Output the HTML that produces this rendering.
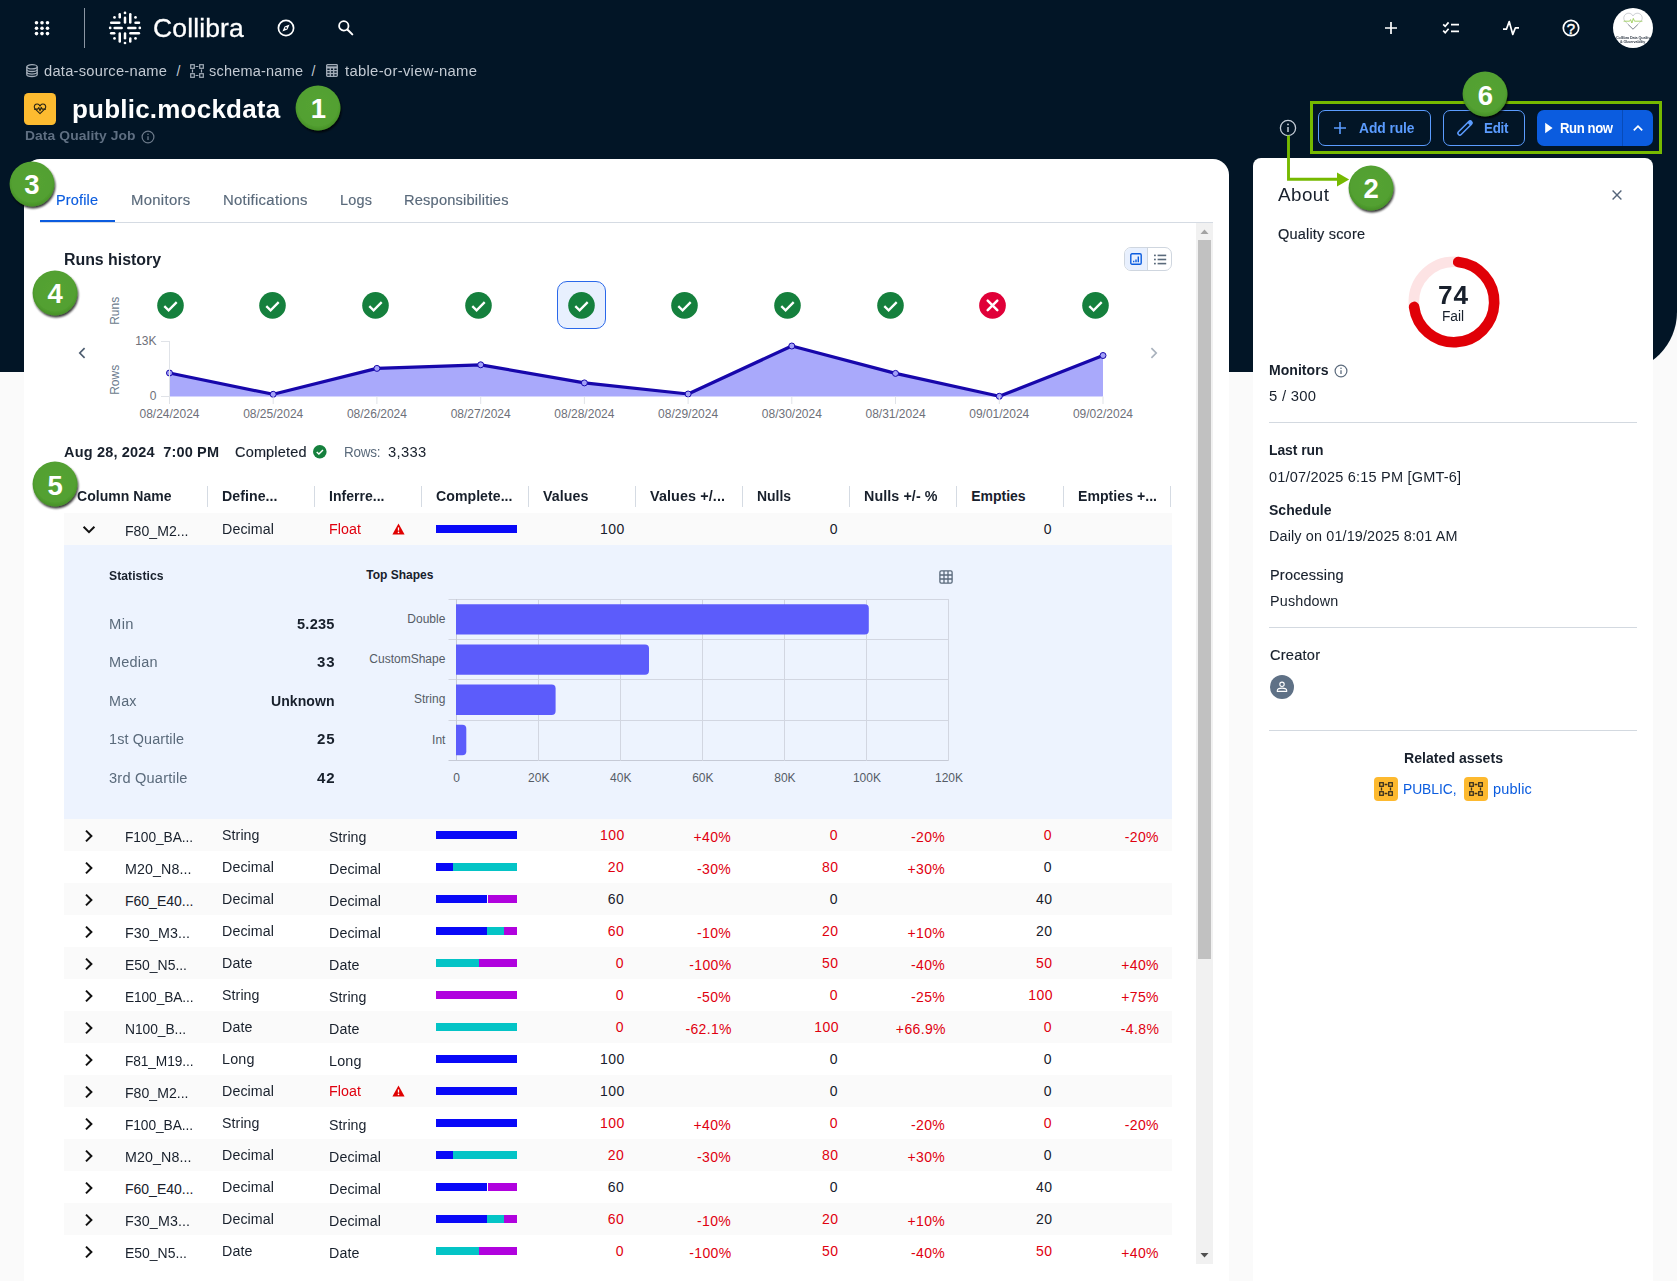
<!DOCTYPE html>
<html lang="en"><head><meta charset="utf-8"><title>public.mockdata - Data Quality Job</title>
<style>
html,body{margin:0;padding:0;}
body{width:1677px;height:1281px;overflow:hidden;background:#fafafa;font-family:'Liberation Sans', Arial, sans-serif;color:#18202c;position:relative;}
.b{position:absolute;box-sizing:border-box;}
.t{position:absolute;white-space:pre;line-height:1;}
svg{overflow:visible;}
</style></head>
<body>
<!-- page chrome -->
<div class="b" style="left:0px;top:0px;width:1677px;height:372px;background:#021526;border-bottom-right-radius:60px;"></div>
<div class="b" style="left:24px;top:159px;width:1205px;height:1122px;background:#fff;border-radius:16px 16px 0 0;"></div>
<div class="b" style="left:1253px;top:158px;width:400px;height:1123px;background:#fff;border-radius:8px 8px 0 0;"></div>
<!-- top navigation -->
<svg class="b" style="left:0px;top:0px;" width="60" height="56" viewBox="0 0 60 56"><g fill="#fff"><circle cx="36.5" cy="22.8" r="1.8"/><circle cx="36.5" cy="28.2" r="1.8"/><circle cx="36.5" cy="33.6" r="1.8"/><circle cx="42" cy="22.8" r="1.8"/><circle cx="42" cy="28.2" r="1.8"/><circle cx="42" cy="33.6" r="1.8"/><circle cx="47.5" cy="22.8" r="1.8"/><circle cx="47.5" cy="28.2" r="1.8"/><circle cx="47.5" cy="33.6" r="1.8"/></g></svg>
<div class="b" style="left:84px;top:8px;width:1px;height:40px;background:#8b96a3;"></div>
<svg class="b" style="left:0px;top:0px;" width="150" height="56" viewBox="0 0 150 56"><g stroke="#fff" stroke-width="2.5" stroke-linecap="round" fill="none"><path d="M111.2 22.65L119.3 22.65"/><path d="M135.5 22.65L139 22.65"/><circle cx="110.2" cy="27.9" r="1.35" fill="#fff" stroke="none"/><path d="M114.6 27.9L121.7 27.9"/><path d="M128.3 27.9L135.4 27.9"/><circle cx="139.8" cy="27.9" r="1.35" fill="#fff" stroke="none"/><path d="M111.2 33.3L114.2 33.3"/><path d="M130.4 33.3L138.9 33.3"/><path d="M119.75 14.3L119.75 17.3"/><circle cx="125" cy="12.9" r="1.35" fill="#fff" stroke="none"/><path d="M125 17.7L125 22.4"/><path d="M130.25 14.3L130.25 22.4"/><path d="M119.75 33.4L119.75 41.5"/><path d="M125 33.4L125 38.2"/><circle cx="125" cy="43" r="1.35" fill="#fff" stroke="none"/><path d="M130.25 38.6L130.25 41.5"/><circle cx="114.5" cy="17.4" r="1.35" fill="#fff" stroke="none"/><circle cx="135.5" cy="17.4" r="1.35" fill="#fff" stroke="none"/><circle cx="114.5" cy="38.4" r="1.35" fill="#fff" stroke="none"/><circle cx="135.5" cy="38.4" r="1.35" fill="#fff" stroke="none"/></g></svg>
<span class="t" style="left:153.00px;top:15.40px;font-size:26px;color:#fff;letter-spacing:0.148px;transform:scaleX(1.0180);transform-origin:0 50%;-webkit-text-stroke:0.3px #fff;">Collibra</span>
<svg class="b" style="left:276px;top:18px;" width="20" height="20" viewBox="0 0 20 20"><circle cx="10" cy="10" r="7.6" fill="none" stroke="#fff" stroke-width="1.7"/><path d="M13.6 6.4L11.4 11.4L6.4 13.6L8.6 8.6Z" fill="#fff"/><circle cx="10" cy="10" r="0.9" fill="#021526"/></svg>
<svg class="b" style="left:336px;top:18px;" width="20" height="20" viewBox="0 0 20 20"><circle cx="7.8" cy="7.9" r="4.7" fill="none" stroke="#fff" stroke-width="1.8"/><path d="M11.4 11.5L16.3 16.4" stroke="#fff" stroke-width="2" stroke-linecap="round"/></svg>
<svg class="b" style="left:1381px;top:18px;" width="20" height="20" viewBox="0 0 20 20"><path d="M10 4V16M4 10H16" stroke="#fff" stroke-width="1.7" fill="none"/></svg>
<svg class="b" style="left:1441px;top:18px;" width="20" height="20" viewBox="0 0 20 20"><g stroke="#fff" stroke-width="1.7" fill="none"><path d="M2.2 6.3L4.2 8.3L7.6 4.4"/><path d="M2.2 12.7L4.2 14.7L7.6 10.8"/><path d="M10 6.6H18M10 13.4H18"/></g></svg>
<svg class="b" style="left:1501px;top:18px;" width="20" height="20" viewBox="0 0 20 20"><path d="M2 11.2H5.4L8.2 3.6L11.8 16.4L14.4 9.8H18" stroke="#fff" stroke-width="1.7" fill="none" stroke-linejoin="round"/></svg>
<svg class="b" style="left:1561px;top:18px;" width="20" height="20" viewBox="0 0 20 20"><circle cx="10" cy="10" r="7.7" fill="none" stroke="#fff" stroke-width="1.7"/></svg>
<span class="t" style="left:1566.83px;top:20.77px;font-size:15px;color:#fff;-webkit-text-stroke:0.45px #fff;">?</span>
<svg class="b" style="left:1613px;top:8px;" width="40" height="40" viewBox="0 0 40 40"><circle cx="20" cy="20" r="20" fill="#fff"/><path d="M20 21.2L11.9 13.1A4.83 4.83 0 1 1 20 8A4.83 4.83 0 1 1 28.1 13.1Z" fill="none" stroke="#b9bdc3" stroke-width="0.7" stroke-linejoin="round"/><path d="M15.2 16.6L20 21.2L24.8 16.6" fill="none" stroke="#6d737b" stroke-width="0.7"/><path d="M10.6 13.2H16.6L17.6 11.6L18.9 15L20.3 10.4L21.5 13.2H29.4" fill="none" stroke="#8cc63f" stroke-width="0.75" stroke-linejoin="round"/></svg>
<span class="t" style="left:1615.75px;top:35.55px;font-size:4px;font-weight:700;color:#39424e;letter-spacing:-0.105px;transform:scaleX(0.9261);transform-origin:0 50%;">Collibra Data Quality</span>
<span class="t" style="left:1620.30px;top:40.05px;font-size:4px;font-weight:700;color:#39424e;letter-spacing:-0.123px;transform:scaleX(0.9194);transform-origin:0 50%;">&amp; Observability</span>
<!-- breadcrumbs -->
<svg class="b" style="left:26px;top:64.2px;" width="12" height="13.4" viewBox="0 0 12 13.4"><g fill="none" stroke="#a3adb9" stroke-width="1.3"><ellipse cx="6" cy="2.8" rx="5.2" ry="2.1"/><path d="M0.8 2.8V10.4C0.8 11.6 3.1 12.5 6 12.5S11.2 11.6 11.2 10.4V2.8"/><path d="M0.8 5.4C0.8 6.6 3.1 7.5 6 7.5S11.2 6.6 11.2 5.4M0.8 8C0.8 9.2 3.1 10.1 6 10.1S11.2 9.2 11.2 8"/></g></svg>
<span class="t" style="left:44.40px;top:64.16px;font-size:14px;color:#c3cad3;letter-spacing:0.238px;transform:scaleX(1.0495);transform-origin:0 50%;">data-source-name</span>
<span class="t" style="left:176.40px;top:64.16px;font-size:14px;color:#c3cad3;">/</span>
<svg class="b" style="left:190px;top:64.2px;" width="14" height="14" viewBox="0 0 14 14"><g fill="none" stroke="#a3adb9" stroke-width="1.2"><rect x="0.7" y="0.7" width="3.6" height="3.6"/><rect x="9.7" y="0.7" width="3.6" height="3.6"/><rect x="0.7" y="9.7" width="3.6" height="3.6"/><rect x="9.7" y="9.7" width="3.6" height="3.6"/><path d="M5.6 2.5H8.4M5.6 11.5H8.4M2.5 5.4V8.6M11.5 5.4V8.6"/></g></svg>
<span class="t" style="left:209.00px;top:64.16px;font-size:14px;color:#c3cad3;letter-spacing:0.205px;transform:scaleX(1.0358);transform-origin:0 50%;">schema-name</span>
<span class="t" style="left:311.40px;top:64.16px;font-size:14px;color:#c3cad3;">/</span>
<svg class="b" style="left:326px;top:64.4px;" width="12" height="13" viewBox="0 0 12 13"><g fill="none" stroke="#a3adb9" stroke-width="1.3"><rect x="0.7" y="0.7" width="10.6" height="11.6" rx="0.8"/><path d="M0.7 3.4H11.3" stroke-width="2.2"/><path d="M0.7 6.6H11.3M0.7 9.5H11.3M4.3 3.4V12.3M7.7 3.4V12.3"/></g></svg>
<span class="t" style="left:344.50px;top:64.16px;font-size:14px;color:#c3cad3;letter-spacing:0.270px;transform:scaleX(1.0609);transform-origin:0 50%;">table-or-view-name</span>
<!-- title -->
<div class="b" style="left:24px;top:92.8px;width:32px;height:32.3px;background:#fdbb30;border-radius:4.5px;"></div>
<svg class="b" style="left:34px;top:102.3px;" width="12" height="12.5" viewBox="0 0 12 12.5"><path d="M6 11.7L1.1 6.9A2.9 2.9 0 1 1 6 4.2A2.9 2.9 0 1 1 10.9 6.9Z" fill="none" stroke="#2a2414" stroke-width="1.1" stroke-linejoin="round"/><path d="M0 7.1H3.7L4.8 5.5L6 8.8L7.2 5.4L8.2 7.1H12" fill="none" stroke="#2a2414" stroke-width="1.1" stroke-linejoin="round"/></svg>
<span class="t" style="left:71.90px;top:97.14px;font-size:25.5px;font-weight:700;color:#fff;letter-spacing:0.195px;transform:scaleX(1.0208);transform-origin:0 50%;">public.mockdata</span>
<span class="t" style="left:24.50px;top:129.46px;font-size:13.6px;font-weight:700;color:#5f6f82;letter-spacing:0.085px;transform:scaleX(1.0181);transform-origin:0 50%;">Data Quality Job</span>
<svg class="b" style="left:140px;top:128.6px;" width="16" height="16" viewBox="0 0 16 16"><circle cx="8" cy="8" r="5.9" fill="none" stroke="#6c7a8a" stroke-width="1.2"/><path d="M8 7.2V11" stroke="#6c7a8a" stroke-width="1.3"/><circle cx="8" cy="5.2" r="0.8" fill="#6c7a8a"/></svg>
<!-- header actions -->
<svg class="b" style="left:1278px;top:118px;" width="20" height="20" viewBox="0 0 20 20"><circle cx="10" cy="10" r="7.6" fill="none" stroke="#c4ccd6" stroke-width="1.3"/><path d="M10 9V14" stroke="#c4ccd6" stroke-width="1.5"/><circle cx="10" cy="6.4" r="0.95" fill="#c4ccd6"/></svg>
<div class="b" style="left:1318px;top:110px;width:113px;height:36px;border:1px solid #5b9cff;border-radius:7px;"></div>
<svg class="b" style="left:1333px;top:121px;" width="14" height="14" viewBox="0 0 14 14"><path d="M7 1V13M1 7H13" stroke="#5b9cff" stroke-width="1.6" fill="none"/></svg>
<span class="t" style="left:1359.00px;top:120.96px;font-size:14px;font-weight:700;color:#5b9cff;letter-spacing:-0.074px;transform:scaleX(0.9865);transform-origin:0 50%;">Add rule</span>
<div class="b" style="left:1443px;top:110px;width:82px;height:36px;border:1px solid #5b9cff;border-radius:7px;"></div>
<svg class="b" style="left:1455px;top:117.9px;" width="20" height="20" viewBox="0 0 20 20"><g transform="translate(10 10) rotate(-45)"><rect x="-9.2" y="-1.9" width="18.4" height="3.8" rx="1.9" fill="none" stroke="#5b9cff" stroke-width="1.5"/><rect x="5.4" y="-1.9" width="3.8" height="3.8" rx="1.2" fill="#5b9cff"/></g></svg>
<span class="t" style="left:1483.60px;top:121.06px;font-size:14px;font-weight:700;color:#5b9cff;letter-spacing:-0.287px;transform:scaleX(0.9534);transform-origin:0 50%;">Edit</span>
<div class="b" style="left:1537px;top:110px;width:116px;height:36px;background:#0b5cdf;border-radius:7px;"></div>
<div class="b" style="left:1622px;top:110px;width:1px;height:36px;background:#084bb8;"></div>
<svg class="b" style="left:1544px;top:122px;" width="10" height="12" viewBox="0 0 10 12"><path d="M1.2 0.8L8.6 6L1.2 11.2Z" fill="#fff"/></svg>
<span class="t" style="left:1559.50px;top:120.96px;font-size:14px;font-weight:700;color:#fff;letter-spacing:-0.434px;transform:scaleX(0.9380);transform-origin:0 50%;">Run now</span>
<svg class="b" style="left:1631px;top:122px;" width="14" height="12" viewBox="0 0 14 12"><path d="M2.8 8.4L7 4.2L11.2 8.4" fill="none" stroke="#fff" stroke-width="1.7"/></svg>
<!-- about panel -->
<span class="t" style="left:1277.60px;top:187.30px;font-size:17.8px;letter-spacing:0.428px;transform:scaleX(1.0585);transform-origin:0 50%;">About</span>
<svg class="b" style="left:1610px;top:188px;" width="14" height="14" viewBox="0 0 14 14"><path d="M2.6 2.6L11.4 11.4M11.4 2.6L2.6 11.4" stroke="#55657a" stroke-width="1.4" fill="none"/></svg>
<span class="t" style="left:1277.50px;top:226.76px;font-size:14px;-webkit-text-stroke:0.16px #18202c;letter-spacing:0.170px;transform:scaleX(1.0389);transform-origin:0 50%;">Quality score</span>
<svg class="b" style="left:1403.5px;top:251.5px;" width="100" height="100" viewBox="0 0 100 100"><circle cx="50" cy="50" r="40.2" fill="none" stroke="#fde3e4" stroke-width="10.6"/><path d="M54.20 10.02A40.2 40.2 0 1 1 10.10 54.90" fill="none" stroke="#e00007" stroke-width="10.6" stroke-linecap="round"/></svg>
<span class="t" style="left:1438.00px;top:282.99px;font-size:25px;font-weight:700;letter-spacing:0.836px;transform:scaleX(1.0472);transform-origin:0 50%;">74</span>
<span class="t" style="left:1442.00px;top:309.36px;font-size:14px;letter-spacing:-0.076px;transform:scaleX(0.9850);transform-origin:0 50%;">Fail</span>
<span class="t" style="left:1269.30px;top:362.76px;font-size:14px;font-weight:700;letter-spacing:0.022px;transform:scaleX(1.0040);transform-origin:0 50%;">Monitors</span>
<svg class="b" style="left:1333px;top:362.6px;" width="16" height="16" viewBox="0 0 16 16"><circle cx="8" cy="8" r="5.9" fill="none" stroke="#5c6b7d" stroke-width="1.2"/><path d="M8 7.2V11" stroke="#5c6b7d" stroke-width="1.3"/><circle cx="8" cy="5.2" r="0.8" fill="#5c6b7d"/></svg>
<span class="t" style="left:1269.30px;top:389.46px;font-size:14px;letter-spacing:0.263px;transform:scaleX(1.0584);transform-origin:0 50%;">5 / 300</span>
<div class="b" style="left:1269px;top:422px;width:368px;height:1px;background:#d3d9e0;"></div>
<span class="t" style="left:1269.30px;top:442.96px;font-size:14px;font-weight:700;letter-spacing:-0.042px;transform:scaleX(0.9920);transform-origin:0 50%;">Last run</span>
<span class="t" style="left:1269.30px;top:469.76px;font-size:14px;letter-spacing:0.177px;transform:scaleX(1.0381);transform-origin:0 50%;">01/07/2025 6:15 PM [GMT-6]</span>
<span class="t" style="left:1269.30px;top:502.76px;font-size:14px;font-weight:700;letter-spacing:0.014px;transform:scaleX(1.0024);transform-origin:0 50%;">Schedule</span>
<span class="t" style="left:1269.30px;top:528.96px;font-size:14px;letter-spacing:0.130px;transform:scaleX(1.0290);transform-origin:0 50%;">Daily on 01/19/2025 8:01 AM</span>
<span class="t" style="left:1270.30px;top:567.76px;font-size:14px;-webkit-text-stroke:0.16px #18202c;letter-spacing:0.182px;transform:scaleX(1.0367);transform-origin:0 50%;">Processing</span>
<span class="t" style="left:1270.30px;top:593.96px;font-size:14px;letter-spacing:0.162px;transform:scaleX(1.0267);transform-origin:0 50%;">Pushdown</span>
<div class="b" style="left:1269px;top:627px;width:368px;height:1px;background:#d3d9e0;"></div>
<span class="t" style="left:1270.30px;top:647.76px;font-size:14px;-webkit-text-stroke:0.16px #18202c;letter-spacing:0.212px;transform:scaleX(1.0426);transform-origin:0 50%;">Creator</span>
<svg class="b" style="left:1269.7px;top:674.8px;" width="24" height="24" viewBox="0 0 24 24"><circle cx="12" cy="12" r="12" fill="#5f7186"/><circle cx="12" cy="9.3" r="2.2" fill="none" stroke="#fff" stroke-width="1.1"/><path d="M7.3 16.4V15.6C7.3 13.9 9.4 13.1 12 13.1S16.7 13.9 16.7 15.6V16.4Z" fill="none" stroke="#fff" stroke-width="1.1" stroke-linejoin="round"/></svg>
<div class="b" style="left:1269px;top:730px;width:368px;height:1px;background:#d3d9e0;"></div>
<span class="t" style="left:1403.50px;top:750.96px;font-size:14px;font-weight:700;letter-spacing:0.029px;transform:scaleX(1.0057);transform-origin:0 50%;">Related assets</span>
<div class="b" style="left:1374px;top:777px;width:24px;height:24px;background:#fdb92f;border-radius:4px;"></div>
<svg class="b" style="left:1379px;top:782px;" width="14" height="14" viewBox="0 0 14 14"><g fill="none" stroke="#3a3120" stroke-width="1.3"><rect x="0.7" y="0.7" width="3.6" height="3.6"/><rect x="9.7" y="0.7" width="3.6" height="3.6"/><rect x="0.7" y="9.7" width="3.6" height="3.6"/><rect x="9.7" y="9.7" width="3.6" height="3.6"/><path d="M5.6 2.5H8.4M5.6 11.5H8.4M2.5 5.4V8.6M11.5 5.4V8.6"/></g></svg>
<div class="b" style="left:1464px;top:777px;width:24px;height:24px;background:#fdb92f;border-radius:4px;"></div>
<svg class="b" style="left:1469px;top:782px;" width="14" height="14" viewBox="0 0 14 14"><g fill="none" stroke="#3a3120" stroke-width="1.3"><rect x="0.7" y="0.7" width="3.6" height="3.6"/><rect x="9.7" y="0.7" width="3.6" height="3.6"/><rect x="0.7" y="9.7" width="3.6" height="3.6"/><rect x="9.7" y="9.7" width="3.6" height="3.6"/><path d="M5.6 2.5H8.4M5.6 11.5H8.4M2.5 5.4V8.6M11.5 5.4V8.6"/></g></svg>
<span class="t" style="left:1402.50px;top:781.96px;font-size:14px;color:#0b5cdf;letter-spacing:-0.065px;transform:scaleX(0.9893);transform-origin:0 50%;">PUBLIC,</span>
<span class="t" style="left:1492.70px;top:781.96px;font-size:14px;color:#0b5cdf;letter-spacing:0.170px;transform:scaleX(1.0362);transform-origin:0 50%;">public</span>
<!-- tabs -->
<div class="b" style="left:40px;top:222px;width:1173px;height:1px;background:#d5dbe3;"></div>
<div class="b" style="left:40px;top:220px;width:75px;height:2.4px;background:#0b5cdf;"></div>
<span class="t" style="left:56.40px;top:192.96px;font-size:14px;-webkit-text-stroke:0.16px #0b5cdf;color:#0b5cdf;letter-spacing:0.149px;transform:scaleX(1.0350);transform-origin:0 50%;">Profile</span>
<span class="t" style="left:131.00px;top:192.96px;font-size:14px;-webkit-text-stroke:0.16px #5a6a7b;color:#5a6a7b;letter-spacing:0.297px;transform:scaleX(1.0616);transform-origin:0 50%;">Monitors</span>
<span class="t" style="left:222.50px;top:192.96px;font-size:14px;-webkit-text-stroke:0.16px #5a6a7b;color:#5a6a7b;letter-spacing:0.258px;transform:scaleX(1.0648);transform-origin:0 50%;">Notifications</span>
<span class="t" style="left:339.70px;top:192.96px;font-size:14px;-webkit-text-stroke:0.16px #5a6a7b;color:#5a6a7b;letter-spacing:0.212px;transform:scaleX(1.0324);transform-origin:0 50%;">Logs</span>
<span class="t" style="left:403.90px;top:192.96px;font-size:14px;-webkit-text-stroke:0.16px #5a6a7b;color:#5a6a7b;letter-spacing:0.184px;transform:scaleX(1.0445);transform-origin:0 50%;">Responsibilities</span>
<div class="b" style="left:1196px;top:223px;width:17px;height:1041px;background:#f1f1f1;"></div>
<div class="b" style="left:1198px;top:240px;width:13px;height:719px;background:#c1c1c1;"></div>
<svg class="b" style="left:1196px;top:223px;" width="17" height="17" viewBox="0 0 17 17"><path d="M4.5 11L8.5 6.5L12.5 11Z" fill="#a3a3a3"/></svg>
<svg class="b" style="left:1196px;top:1247px;" width="17" height="17" viewBox="0 0 17 17"><path d="M4.5 6L8.5 10.5L12.5 6Z" fill="#505050"/></svg>
<!-- runs history -->
<span class="t" style="left:64.00px;top:251.78px;font-size:16px;font-weight:700;letter-spacing:-0.029px;transform:scaleX(0.9951);transform-origin:0 50%;">Runs history</span>
<div class="b" style="left:1124px;top:247px;width:48px;height:24px;background:#fff;border:1px solid #cfd6df;border-radius:7px;overflow:hidden;"><div class="b" style="left:0;top:0;width:23px;height:22px;background:#e8f0fe;border-right:1px solid #cfd6df;"></div></div>
<svg class="b" style="left:1130px;top:253px;" width="12" height="12" viewBox="0 0 12 12"><rect x="0.8" y="0.8" width="10.4" height="10.4" rx="1.2" fill="none" stroke="#0b5cdf" stroke-width="1.4"/><path d="M3.7 9.3V7.7M6 9.3V6.4M8.3 9.3V3.4" stroke="#0b5cdf" stroke-width="1.4"/></svg>
<svg class="b" style="left:1153.5px;top:253.5px;" width="13" height="11" viewBox="0 0 13 11"><g fill="#5a6a7b"><rect x="0" y="0.6" width="1.8" height="1.6"/><rect x="0" y="4.7" width="1.8" height="1.6"/><rect x="0" y="8.8" width="1.8" height="1.6"/><rect x="3.6" y="0.6" width="8.6" height="1.6"/><rect x="3.6" y="4.7" width="8.6" height="1.6"/><rect x="3.6" y="8.8" width="8.6" height="1.6"/></g></svg>
<span class="t" style="left:100.69px;top:304.54px;font-size:12px;color:#6b7a8c;transform:rotate(-90deg);transform-origin:50% 48.85%;">Runs</span>
<span class="t" style="left:99.69px;top:374.04px;font-size:12px;color:#6b7a8c;transform:rotate(-90deg);transform-origin:50% 48.85%;">Rows</span>
<div class="b" style="left:557.4px;top:280.7px;width:48.5px;height:48.3px;background:#e8f0fe;border:1.2px solid #2a68ea;border-radius:10px;"></div>
<svg class="b" style="left:156.5px;top:291.5px;" width="27" height="27" viewBox="0 0 27 27"><circle cx="13.5" cy="13.4" r="13.3" fill="#15803d"/><path d="M7.3 14.1L11.6 18.3L19.7 10.1" stroke="#fff" stroke-width="2.3" fill="none"/></svg>
<svg class="b" style="left:259.37px;top:291.5px;" width="27" height="27" viewBox="0 0 27 27"><circle cx="13.5" cy="13.4" r="13.3" fill="#15803d"/><path d="M7.3 14.1L11.6 18.3L19.7 10.1" stroke="#fff" stroke-width="2.3" fill="none"/></svg>
<svg class="b" style="left:362.24px;top:291.5px;" width="27" height="27" viewBox="0 0 27 27"><circle cx="13.5" cy="13.4" r="13.3" fill="#15803d"/><path d="M7.3 14.1L11.6 18.3L19.7 10.1" stroke="#fff" stroke-width="2.3" fill="none"/></svg>
<svg class="b" style="left:465.11px;top:291.5px;" width="27" height="27" viewBox="0 0 27 27"><circle cx="13.5" cy="13.4" r="13.3" fill="#15803d"/><path d="M7.3 14.1L11.6 18.3L19.7 10.1" stroke="#fff" stroke-width="2.3" fill="none"/></svg>
<svg class="b" style="left:567.98px;top:291.5px;" width="27" height="27" viewBox="0 0 27 27"><circle cx="13.5" cy="13.4" r="13.3" fill="#15803d"/><path d="M7.3 14.1L11.6 18.3L19.7 10.1" stroke="#fff" stroke-width="2.3" fill="none"/></svg>
<svg class="b" style="left:670.85px;top:291.5px;" width="27" height="27" viewBox="0 0 27 27"><circle cx="13.5" cy="13.4" r="13.3" fill="#15803d"/><path d="M7.3 14.1L11.6 18.3L19.7 10.1" stroke="#fff" stroke-width="2.3" fill="none"/></svg>
<svg class="b" style="left:773.72px;top:291.5px;" width="27" height="27" viewBox="0 0 27 27"><circle cx="13.5" cy="13.4" r="13.3" fill="#15803d"/><path d="M7.3 14.1L11.6 18.3L19.7 10.1" stroke="#fff" stroke-width="2.3" fill="none"/></svg>
<svg class="b" style="left:876.59px;top:291.5px;" width="27" height="27" viewBox="0 0 27 27"><circle cx="13.5" cy="13.4" r="13.3" fill="#15803d"/><path d="M7.3 14.1L11.6 18.3L19.7 10.1" stroke="#fff" stroke-width="2.3" fill="none"/></svg>
<svg class="b" style="left:979.46px;top:291.5px;" width="27" height="27" viewBox="0 0 27 27"><circle cx="13.5" cy="13.4" r="13.35" fill="#e00038"/><path d="M8.7 8.6L18.3 18.2M18.3 8.6L8.7 18.2" stroke="#fff" stroke-width="2.5" stroke-linecap="round" fill="none"/></svg>
<svg class="b" style="left:1082.33px;top:291.5px;" width="27" height="27" viewBox="0 0 27 27"><circle cx="13.5" cy="13.4" r="13.3" fill="#15803d"/><path d="M7.3 14.1L11.6 18.3L19.7 10.1" stroke="#fff" stroke-width="2.3" fill="none"/></svg>
<svg class="b" style="left:76px;top:346px;" width="12" height="14" viewBox="0 0 12 14"><path d="M8.6 2.2L3.8 7L8.6 11.8" fill="none" stroke="#4d5d70" stroke-width="1.7"/></svg>
<svg class="b" style="left:1148px;top:346px;" width="12" height="14" viewBox="0 0 12 14"><path d="M3.4 2.2L8.2 7L3.4 11.8" fill="none" stroke="#a9b2bd" stroke-width="1.7"/></svg>
<svg class="b" style="left:0px;top:0px;" width="1230" height="420" viewBox="0 0 1230 420"><polygon points="169.5,396.5 169.5,373 273.2,394.3 376.9,368.4 480.7,364.8 584.4,382.9 688.1,394 791.8,346 895.5,373.4 999.3,396.3 1103.0,355.5 1103.0,396.5" fill="#a9a9fb"/><polyline points="169.5,373 273.2,394.3 376.9,368.4 480.7,364.8 584.4,382.9 688.1,394 791.8,346 895.5,373.4 999.3,396.3 1103.0,355.5" fill="none" stroke="#1707ab" stroke-width="3.2" stroke-linejoin="round"/><circle cx="169.5" cy="373" r="3" fill="#a3a1f8" stroke="#1707ab" stroke-width="1"/><circle cx="273.2" cy="394.3" r="3" fill="#a3a1f8" stroke="#1707ab" stroke-width="1"/><circle cx="376.9" cy="368.4" r="3" fill="#a3a1f8" stroke="#1707ab" stroke-width="1"/><circle cx="480.7" cy="364.8" r="3" fill="#a3a1f8" stroke="#1707ab" stroke-width="1"/><circle cx="584.4" cy="382.9" r="3" fill="#a3a1f8" stroke="#1707ab" stroke-width="1"/><circle cx="688.1" cy="394" r="3" fill="#a3a1f8" stroke="#1707ab" stroke-width="1"/><circle cx="791.8" cy="346" r="3" fill="#a3a1f8" stroke="#1707ab" stroke-width="1"/><circle cx="895.5" cy="373.4" r="3" fill="#a3a1f8" stroke="#1707ab" stroke-width="1"/><circle cx="999.3" cy="396.3" r="3" fill="#a3a1f8" stroke="#1707ab" stroke-width="1"/><circle cx="1103.0" cy="355.5" r="3" fill="#a3a1f8" stroke="#1707ab" stroke-width="1"/><path d="M169.5 341V396.5" stroke="#e0e3e8" stroke-width="1"/><path d="M161 341.5H169.5M161 396.5H169.5" stroke="#e0e3e8" stroke-width="1"/><path d="M169.5 396.5V404" stroke="#e0e3e8" stroke-width="1"/><path d="M273.2 396.5V404" stroke="#e0e3e8" stroke-width="1"/><path d="M376.9 396.5V404" stroke="#e0e3e8" stroke-width="1"/><path d="M480.7 396.5V404" stroke="#e0e3e8" stroke-width="1"/><path d="M584.4 396.5V404" stroke="#e0e3e8" stroke-width="1"/><path d="M688.1 396.5V404" stroke="#e0e3e8" stroke-width="1"/><path d="M791.8 396.5V404" stroke="#e0e3e8" stroke-width="1"/><path d="M895.5 396.5V404" stroke="#e0e3e8" stroke-width="1"/><path d="M999.3 396.5V404" stroke="#e0e3e8" stroke-width="1"/><path d="M1103.0 396.5V404" stroke="#e0e3e8" stroke-width="1"/></svg>
<span class="t" style="left:135.14px;top:335.14px;font-size:12px;color:#6e7079;">13K</span>
<span class="t" style="left:149.81px;top:390.14px;font-size:12px;color:#6e7079;">0</span>
<span class="t" style="left:139.47px;top:407.74px;font-size:12px;color:#6e7079;">08/24/2024</span>
<span class="t" style="left:243.19px;top:407.74px;font-size:12px;color:#6e7079;">08/25/2024</span>
<span class="t" style="left:346.91px;top:407.74px;font-size:12px;color:#6e7079;">08/26/2024</span>
<span class="t" style="left:450.63px;top:407.74px;font-size:12px;color:#6e7079;">08/27/2024</span>
<span class="t" style="left:554.35px;top:407.74px;font-size:12px;color:#6e7079;">08/28/2024</span>
<span class="t" style="left:658.07px;top:407.74px;font-size:12px;color:#6e7079;">08/29/2024</span>
<span class="t" style="left:761.79px;top:407.74px;font-size:12px;color:#6e7079;">08/30/2024</span>
<span class="t" style="left:865.51px;top:407.74px;font-size:12px;color:#6e7079;">08/31/2024</span>
<span class="t" style="left:969.23px;top:407.74px;font-size:12px;color:#6e7079;">09/01/2024</span>
<span class="t" style="left:1072.95px;top:407.74px;font-size:12px;color:#6e7079;">09/02/2024</span>
<span class="t" style="left:64.00px;top:444.96px;font-size:14px;font-weight:700;letter-spacing:0.168px;transform:scaleX(1.0357);transform-origin:0 50%;">Aug 28, 2024  7:00 PM</span>
<span class="t" style="left:235.40px;top:444.96px;font-size:14px;-webkit-text-stroke:0.16px #18202c;letter-spacing:0.184px;transform:scaleX(1.0336);transform-origin:0 50%;">Completed</span>
<svg class="b" style="left:313px;top:445.1px;" width="13.6" height="13.6" viewBox="0 0 13.6 13.6"><circle cx="6.8" cy="6.8" r="6.8" fill="#15803d"/><path d="M3.7 7L5.9 9.1L10 4.9" stroke="#fff" stroke-width="1.4" fill="none"/></svg>
<span class="t" style="left:344.30px;top:444.96px;font-size:14px;color:#5a6a7b;letter-spacing:-0.250px;transform:scaleX(0.9629);transform-origin:0 50%;">Rows:</span>
<span class="t" style="left:387.50px;top:444.96px;font-size:14px;letter-spacing:0.308px;transform:scaleX(1.0557);transform-origin:0 50%;">3,333</span>
<!-- column table -->
<span class="t" style="left:76.90px;top:488.76px;font-size:14px;font-weight:700;letter-spacing:0.015px;transform:scaleX(1.0024);transform-origin:0 50%;">Column Name</span>
<span class="t" style="left:222.40px;top:488.76px;font-size:14px;font-weight:700;letter-spacing:0.051px;transform:scaleX(1.0114);transform-origin:0 50%;">Define...</span>
<span class="t" style="left:329.30px;top:488.76px;font-size:14px;font-weight:700;letter-spacing:0.011px;transform:scaleX(1.0027);transform-origin:0 50%;">Inferre...</span>
<span class="t" style="left:436.20px;top:488.76px;font-size:14px;font-weight:700;letter-spacing:0.041px;transform:scaleX(1.0082);transform-origin:0 50%;">Complete...</span>
<span class="t" style="left:543.20px;top:488.76px;font-size:14px;font-weight:700;letter-spacing:0.089px;transform:scaleX(1.0152);transform-origin:0 50%;">Values</span>
<span class="t" style="left:650.20px;top:488.76px;font-size:14px;font-weight:700;letter-spacing:0.106px;transform:scaleX(1.0250);transform-origin:0 50%;">Values +/...</span>
<span class="t" style="left:757.20px;top:488.76px;font-size:14px;font-weight:700;letter-spacing:-0.024px;transform:scaleX(0.9959);transform-origin:0 50%;">Nulls</span>
<span class="t" style="left:864.20px;top:488.76px;font-size:14px;font-weight:700;letter-spacing:0.091px;transform:scaleX(1.0195);transform-origin:0 50%;">Nulls +/- %</span>
<span class="t" style="left:971.20px;top:488.76px;font-size:14px;font-weight:700;">Empties</span>
<span class="t" style="left:1078.20px;top:488.76px;font-size:14px;font-weight:700;letter-spacing:0.029px;transform:scaleX(1.0061);transform-origin:0 50%;">Empties +...</span>
<div class="b" style="left:207px;top:486px;width:1px;height:21px;background:#d5dbe3;"></div>
<div class="b" style="left:314px;top:486px;width:1px;height:21px;background:#d5dbe3;"></div>
<div class="b" style="left:421px;top:486px;width:1px;height:21px;background:#d5dbe3;"></div>
<div class="b" style="left:528px;top:486px;width:1px;height:21px;background:#d5dbe3;"></div>
<div class="b" style="left:635px;top:486px;width:1px;height:21px;background:#d5dbe3;"></div>
<div class="b" style="left:742px;top:486px;width:1px;height:21px;background:#d5dbe3;"></div>
<div class="b" style="left:849px;top:486px;width:1px;height:21px;background:#d5dbe3;"></div>
<div class="b" style="left:956px;top:486px;width:1px;height:21px;background:#d5dbe3;"></div>
<div class="b" style="left:1063px;top:486px;width:1px;height:21px;background:#d5dbe3;"></div>
<div class="b" style="left:1170px;top:486px;width:1px;height:21px;background:#d5dbe3;"></div>
<div class="b" style="left:64px;top:513px;width:1108px;height:32px;background:#fafafa;"></div>
<svg class="b" style="left:80.5px;top:523.0px;" width="16" height="13" viewBox="0 0 16 13"><path d="M2.6 3.8L8 9.2L13.4 3.8" fill="none" stroke="#111" stroke-width="2"/></svg>
<span class="t" style="left:125.00px;top:523.76px;font-size:14px;letter-spacing:0.023px;transform:scaleX(1.0045);transform-origin:0 50%;">F80_M2...</span>
<span class="t" style="left:222.40px;top:521.76px;font-size:14px;letter-spacing:0.093px;transform:scaleX(1.0169);transform-origin:0 50%;">Decimal</span>
<span class="t" style="left:329.30px;top:522.16px;font-size:14px;color:#e0000f;letter-spacing:0.086px;transform:scaleX(1.0169);transform-origin:0 50%;">Float</span>
<svg class="b" style="left:391.5px;top:522.5px;" width="13" height="12" viewBox="0 0 13 12"><path d="M6.5 0.6L12.6 11.4H0.4Z" fill="#e00000"/><path d="M6.5 4.4V7.6" stroke="#fff" stroke-width="1.3"/><circle cx="6.5" cy="9.4" r="0.8" fill="#fff"/></svg>
<div class="b" style="left:436px;top:525px;width:81px;height:8px;background:#0909f8;"></div>
<span class="t" style="left:599.64px;top:521.76px;font-size:14px;letter-spacing:0.45px;margin-left:0.45px;">100</span>
<span class="t" style="left:829.30px;top:521.76px;font-size:14px;letter-spacing:0.45px;margin-left:0.45px;">0</span>
<span class="t" style="left:1043.30px;top:521.76px;font-size:14px;letter-spacing:0.45px;margin-left:0.45px;">0</span>
<div class="b" style="left:64px;top:819px;width:1108px;height:32px;background:#fafafa;"></div>
<svg class="b" style="left:82px;top:827.5px;" width="13" height="16" viewBox="0 0 13 16"><path d="M4 2.6L9.4 8L4 13.4" fill="none" stroke="#111" stroke-width="2"/></svg>
<span class="t" style="left:125.00px;top:829.76px;font-size:14px;letter-spacing:-0.093px;transform:scaleX(0.9825);transform-origin:0 50%;">F100_BA...</span>
<span class="t" style="left:222.40px;top:827.76px;font-size:14px;letter-spacing:0.073px;transform:scaleX(1.0151);transform-origin:0 50%;">String</span>
<span class="t" style="left:329.30px;top:829.76px;font-size:14px;letter-spacing:0.073px;transform:scaleX(1.0151);transform-origin:0 50%;">String</span>
<div class="b" style="left:436px;top:831px;width:81px;height:8px;background:#0909f8;"></div>
<span class="t" style="left:599.64px;top:827.76px;font-size:14px;color:#e0000f;letter-spacing:0.45px;margin-left:0.45px;">100</span>
<span class="t" style="left:693.20px;top:829.76px;font-size:14px;color:#e0000f;letter-spacing:0.35px;margin-left:0.35px;">+40%</span>
<span class="t" style="left:829.30px;top:827.76px;font-size:14px;color:#e0000f;letter-spacing:0.45px;margin-left:0.45px;">0</span>
<span class="t" style="left:910.71px;top:829.76px;font-size:14px;color:#e0000f;letter-spacing:0.35px;margin-left:0.35px;">-20%</span>
<span class="t" style="left:1043.30px;top:827.76px;font-size:14px;color:#e0000f;letter-spacing:0.45px;margin-left:0.45px;">0</span>
<span class="t" style="left:1124.41px;top:829.76px;font-size:14px;color:#e0000f;letter-spacing:0.35px;margin-left:0.35px;">-20%</span>
<svg class="b" style="left:82px;top:859.5px;" width="13" height="16" viewBox="0 0 13 16"><path d="M4 2.6L9.4 8L4 13.4" fill="none" stroke="#111" stroke-width="2"/></svg>
<span class="t" style="left:125.00px;top:861.76px;font-size:14px;letter-spacing:0.094px;transform:scaleX(1.0177);transform-origin:0 50%;">M20_N8...</span>
<span class="t" style="left:222.40px;top:859.76px;font-size:14px;letter-spacing:0.093px;transform:scaleX(1.0169);transform-origin:0 50%;">Decimal</span>
<span class="t" style="left:329.30px;top:861.76px;font-size:14px;letter-spacing:0.093px;transform:scaleX(1.0169);transform-origin:0 50%;">Decimal</span>
<div class="b" style="left:436px;top:863px;width:17px;height:8px;background:#0909f8;"></div>
<div class="b" style="left:453px;top:863px;width:64px;height:8px;background:#04c4c6;"></div>
<span class="t" style="left:607.42px;top:859.76px;font-size:14px;color:#e0000f;letter-spacing:0.45px;margin-left:0.45px;">20</span>
<span class="t" style="left:696.71px;top:861.76px;font-size:14px;color:#e0000f;letter-spacing:0.35px;margin-left:0.35px;">-30%</span>
<span class="t" style="left:821.52px;top:859.76px;font-size:14px;color:#e0000f;letter-spacing:0.45px;margin-left:0.45px;">80</span>
<span class="t" style="left:907.20px;top:861.76px;font-size:14px;color:#e0000f;letter-spacing:0.35px;margin-left:0.35px;">+30%</span>
<span class="t" style="left:1043.30px;top:859.76px;font-size:14px;letter-spacing:0.45px;margin-left:0.45px;">0</span>
<div class="b" style="left:64px;top:883px;width:1108px;height:32px;background:#fafafa;"></div>
<svg class="b" style="left:82px;top:891.5px;" width="13" height="16" viewBox="0 0 13 16"><path d="M4 2.6L9.4 8L4 13.4" fill="none" stroke="#111" stroke-width="2"/></svg>
<span class="t" style="left:125.00px;top:893.76px;font-size:14px;">F60_E40...</span>
<span class="t" style="left:222.40px;top:891.76px;font-size:14px;letter-spacing:0.093px;transform:scaleX(1.0169);transform-origin:0 50%;">Decimal</span>
<span class="t" style="left:329.30px;top:893.76px;font-size:14px;letter-spacing:0.093px;transform:scaleX(1.0169);transform-origin:0 50%;">Decimal</span>
<div class="b" style="left:436px;top:895px;width:51px;height:8px;background:#0909f8;"></div>
<div class="b" style="left:488px;top:895px;width:29px;height:8px;background:#b002de;"></div>
<span class="t" style="left:607.42px;top:891.76px;font-size:14px;letter-spacing:0.45px;margin-left:0.45px;">60</span>
<span class="t" style="left:829.30px;top:891.76px;font-size:14px;letter-spacing:0.45px;margin-left:0.45px;">0</span>
<span class="t" style="left:1035.52px;top:891.76px;font-size:14px;letter-spacing:0.45px;margin-left:0.45px;">40</span>
<svg class="b" style="left:82px;top:923.5px;" width="13" height="16" viewBox="0 0 13 16"><path d="M4 2.6L9.4 8L4 13.4" fill="none" stroke="#111" stroke-width="2"/></svg>
<span class="t" style="left:125.00px;top:925.76px;font-size:14px;letter-spacing:0.097px;transform:scaleX(1.0187);transform-origin:0 50%;">F30_M3...</span>
<span class="t" style="left:222.40px;top:923.76px;font-size:14px;letter-spacing:0.093px;transform:scaleX(1.0169);transform-origin:0 50%;">Decimal</span>
<span class="t" style="left:329.30px;top:925.76px;font-size:14px;letter-spacing:0.093px;transform:scaleX(1.0169);transform-origin:0 50%;">Decimal</span>
<div class="b" style="left:436px;top:927px;width:51px;height:8px;background:#0909f8;"></div>
<div class="b" style="left:487px;top:927px;width:17px;height:8px;background:#04c4c6;"></div>
<div class="b" style="left:504px;top:927px;width:13px;height:8px;background:#b002de;"></div>
<span class="t" style="left:607.42px;top:923.76px;font-size:14px;color:#e0000f;letter-spacing:0.45px;margin-left:0.45px;">60</span>
<span class="t" style="left:696.71px;top:925.76px;font-size:14px;color:#e0000f;letter-spacing:0.35px;margin-left:0.35px;">-10%</span>
<span class="t" style="left:821.52px;top:923.76px;font-size:14px;color:#e0000f;letter-spacing:0.45px;margin-left:0.45px;">20</span>
<span class="t" style="left:907.20px;top:925.76px;font-size:14px;color:#e0000f;letter-spacing:0.35px;margin-left:0.35px;">+10%</span>
<span class="t" style="left:1035.52px;top:923.76px;font-size:14px;letter-spacing:0.45px;margin-left:0.45px;">20</span>
<div class="b" style="left:64px;top:947px;width:1108px;height:32px;background:#fafafa;"></div>
<svg class="b" style="left:82px;top:955.5px;" width="13" height="16" viewBox="0 0 13 16"><path d="M4 2.6L9.4 8L4 13.4" fill="none" stroke="#111" stroke-width="2"/></svg>
<span class="t" style="left:125.00px;top:957.76px;font-size:14px;letter-spacing:-0.013px;transform:scaleX(0.9974);transform-origin:0 50%;">E50_N5...</span>
<span class="t" style="left:222.40px;top:955.76px;font-size:14px;letter-spacing:0.121px;transform:scaleX(1.0187);transform-origin:0 50%;">Date</span>
<span class="t" style="left:329.30px;top:957.76px;font-size:14px;letter-spacing:0.121px;transform:scaleX(1.0187);transform-origin:0 50%;">Date</span>
<div class="b" style="left:436px;top:959px;width:43px;height:8px;background:#04c4c6;"></div>
<div class="b" style="left:479px;top:959px;width:38px;height:8px;background:#b002de;"></div>
<span class="t" style="left:615.20px;top:955.76px;font-size:14px;color:#e0000f;letter-spacing:0.45px;margin-left:0.45px;">0</span>
<span class="t" style="left:688.93px;top:957.76px;font-size:14px;color:#e0000f;letter-spacing:0.35px;margin-left:0.35px;">-100%</span>
<span class="t" style="left:821.52px;top:955.76px;font-size:14px;color:#e0000f;letter-spacing:0.45px;margin-left:0.45px;">50</span>
<span class="t" style="left:910.71px;top:957.76px;font-size:14px;color:#e0000f;letter-spacing:0.35px;margin-left:0.35px;">-40%</span>
<span class="t" style="left:1035.52px;top:955.76px;font-size:14px;color:#e0000f;letter-spacing:0.45px;margin-left:0.45px;">50</span>
<span class="t" style="left:1120.90px;top:957.76px;font-size:14px;color:#e0000f;letter-spacing:0.35px;margin-left:0.35px;">+40%</span>
<svg class="b" style="left:82px;top:987.5px;" width="13" height="16" viewBox="0 0 13 16"><path d="M4 2.6L9.4 8L4 13.4" fill="none" stroke="#111" stroke-width="2"/></svg>
<span class="t" style="left:125.00px;top:989.76px;font-size:14px;letter-spacing:-0.106px;transform:scaleX(0.9803);transform-origin:0 50%;">E100_BA...</span>
<span class="t" style="left:222.40px;top:987.76px;font-size:14px;letter-spacing:0.073px;transform:scaleX(1.0151);transform-origin:0 50%;">String</span>
<span class="t" style="left:329.30px;top:989.76px;font-size:14px;letter-spacing:0.073px;transform:scaleX(1.0151);transform-origin:0 50%;">String</span>
<div class="b" style="left:436px;top:991px;width:81px;height:8px;background:#b002de;"></div>
<span class="t" style="left:615.20px;top:987.76px;font-size:14px;color:#e0000f;letter-spacing:0.45px;margin-left:0.45px;">0</span>
<span class="t" style="left:696.71px;top:989.76px;font-size:14px;color:#e0000f;letter-spacing:0.35px;margin-left:0.35px;">-50%</span>
<span class="t" style="left:829.30px;top:987.76px;font-size:14px;color:#e0000f;letter-spacing:0.45px;margin-left:0.45px;">0</span>
<span class="t" style="left:910.71px;top:989.76px;font-size:14px;color:#e0000f;letter-spacing:0.35px;margin-left:0.35px;">-25%</span>
<span class="t" style="left:1027.74px;top:987.76px;font-size:14px;color:#e0000f;letter-spacing:0.45px;margin-left:0.45px;">100</span>
<span class="t" style="left:1120.90px;top:989.76px;font-size:14px;color:#e0000f;letter-spacing:0.35px;margin-left:0.35px;">+75%</span>
<div class="b" style="left:64px;top:1011px;width:1108px;height:32px;background:#fafafa;"></div>
<svg class="b" style="left:82px;top:1019.5px;" width="13" height="16" viewBox="0 0 13 16"><path d="M4 2.6L9.4 8L4 13.4" fill="none" stroke="#111" stroke-width="2"/></svg>
<span class="t" style="left:125.00px;top:1021.76px;font-size:14px;letter-spacing:-0.064px;transform:scaleX(0.9878);transform-origin:0 50%;">N100_B...</span>
<span class="t" style="left:222.40px;top:1019.76px;font-size:14px;letter-spacing:0.121px;transform:scaleX(1.0187);transform-origin:0 50%;">Date</span>
<span class="t" style="left:329.30px;top:1021.76px;font-size:14px;letter-spacing:0.121px;transform:scaleX(1.0187);transform-origin:0 50%;">Date</span>
<div class="b" style="left:436px;top:1023px;width:81px;height:8px;background:#04c4c6;"></div>
<span class="t" style="left:615.20px;top:1019.76px;font-size:14px;color:#e0000f;letter-spacing:0.45px;margin-left:0.45px;">0</span>
<span class="t" style="left:685.04px;top:1021.76px;font-size:14px;color:#e0000f;letter-spacing:0.35px;margin-left:0.35px;">-62.1%</span>
<span class="t" style="left:813.74px;top:1019.76px;font-size:14px;color:#e0000f;letter-spacing:0.45px;margin-left:0.45px;">100</span>
<span class="t" style="left:895.52px;top:1021.76px;font-size:14px;color:#e0000f;letter-spacing:0.35px;margin-left:0.35px;">+66.9%</span>
<span class="t" style="left:1043.30px;top:1019.76px;font-size:14px;color:#e0000f;letter-spacing:0.45px;margin-left:0.45px;">0</span>
<span class="t" style="left:1120.52px;top:1021.76px;font-size:14px;color:#e0000f;letter-spacing:0.35px;margin-left:0.35px;">-4.8%</span>
<svg class="b" style="left:82px;top:1051.5px;" width="13" height="16" viewBox="0 0 13 16"><path d="M4 2.6L9.4 8L4 13.4" fill="none" stroke="#111" stroke-width="2"/></svg>
<span class="t" style="left:125.00px;top:1053.76px;font-size:14px;letter-spacing:-0.106px;transform:scaleX(0.9803);transform-origin:0 50%;">F81_M19...</span>
<span class="t" style="left:222.40px;top:1051.76px;font-size:14px;letter-spacing:0.175px;transform:scaleX(1.0259);transform-origin:0 50%;">Long</span>
<span class="t" style="left:329.30px;top:1053.76px;font-size:14px;letter-spacing:0.175px;transform:scaleX(1.0259);transform-origin:0 50%;">Long</span>
<div class="b" style="left:436px;top:1055px;width:81px;height:8px;background:#0909f8;"></div>
<span class="t" style="left:599.64px;top:1051.76px;font-size:14px;letter-spacing:0.45px;margin-left:0.45px;">100</span>
<span class="t" style="left:829.30px;top:1051.76px;font-size:14px;letter-spacing:0.45px;margin-left:0.45px;">0</span>
<span class="t" style="left:1043.30px;top:1051.76px;font-size:14px;letter-spacing:0.45px;margin-left:0.45px;">0</span>
<div class="b" style="left:64px;top:1075px;width:1108px;height:32px;background:#fafafa;"></div>
<svg class="b" style="left:82px;top:1083.5px;" width="13" height="16" viewBox="0 0 13 16"><path d="M4 2.6L9.4 8L4 13.4" fill="none" stroke="#111" stroke-width="2"/></svg>
<span class="t" style="left:125.00px;top:1085.76px;font-size:14px;letter-spacing:0.023px;transform:scaleX(1.0045);transform-origin:0 50%;">F80_M2...</span>
<span class="t" style="left:222.40px;top:1083.76px;font-size:14px;letter-spacing:0.093px;transform:scaleX(1.0169);transform-origin:0 50%;">Decimal</span>
<span class="t" style="left:329.30px;top:1084.16px;font-size:14px;color:#e0000f;letter-spacing:0.086px;transform:scaleX(1.0169);transform-origin:0 50%;">Float</span>
<svg class="b" style="left:391.5px;top:1084.5px;" width="13" height="12" viewBox="0 0 13 12"><path d="M6.5 0.6L12.6 11.4H0.4Z" fill="#e00000"/><path d="M6.5 4.4V7.6" stroke="#fff" stroke-width="1.3"/><circle cx="6.5" cy="9.4" r="0.8" fill="#fff"/></svg>
<div class="b" style="left:436px;top:1087px;width:81px;height:8px;background:#0909f8;"></div>
<span class="t" style="left:599.64px;top:1083.76px;font-size:14px;letter-spacing:0.45px;margin-left:0.45px;">100</span>
<span class="t" style="left:829.30px;top:1083.76px;font-size:14px;letter-spacing:0.45px;margin-left:0.45px;">0</span>
<span class="t" style="left:1043.30px;top:1083.76px;font-size:14px;letter-spacing:0.45px;margin-left:0.45px;">0</span>
<svg class="b" style="left:82px;top:1115.5px;" width="13" height="16" viewBox="0 0 13 16"><path d="M4 2.6L9.4 8L4 13.4" fill="none" stroke="#111" stroke-width="2"/></svg>
<span class="t" style="left:125.00px;top:1117.76px;font-size:14px;letter-spacing:-0.093px;transform:scaleX(0.9825);transform-origin:0 50%;">F100_BA...</span>
<span class="t" style="left:222.40px;top:1115.76px;font-size:14px;letter-spacing:0.073px;transform:scaleX(1.0151);transform-origin:0 50%;">String</span>
<span class="t" style="left:329.30px;top:1117.76px;font-size:14px;letter-spacing:0.073px;transform:scaleX(1.0151);transform-origin:0 50%;">String</span>
<div class="b" style="left:436px;top:1119px;width:81px;height:8px;background:#0909f8;"></div>
<span class="t" style="left:599.64px;top:1115.76px;font-size:14px;color:#e0000f;letter-spacing:0.45px;margin-left:0.45px;">100</span>
<span class="t" style="left:693.20px;top:1117.76px;font-size:14px;color:#e0000f;letter-spacing:0.35px;margin-left:0.35px;">+40%</span>
<span class="t" style="left:829.30px;top:1115.76px;font-size:14px;color:#e0000f;letter-spacing:0.45px;margin-left:0.45px;">0</span>
<span class="t" style="left:910.71px;top:1117.76px;font-size:14px;color:#e0000f;letter-spacing:0.35px;margin-left:0.35px;">-20%</span>
<span class="t" style="left:1043.30px;top:1115.76px;font-size:14px;color:#e0000f;letter-spacing:0.45px;margin-left:0.45px;">0</span>
<span class="t" style="left:1124.41px;top:1117.76px;font-size:14px;color:#e0000f;letter-spacing:0.35px;margin-left:0.35px;">-20%</span>
<div class="b" style="left:64px;top:1139px;width:1108px;height:32px;background:#fafafa;"></div>
<svg class="b" style="left:82px;top:1147.5px;" width="13" height="16" viewBox="0 0 13 16"><path d="M4 2.6L9.4 8L4 13.4" fill="none" stroke="#111" stroke-width="2"/></svg>
<span class="t" style="left:125.00px;top:1149.76px;font-size:14px;letter-spacing:0.094px;transform:scaleX(1.0177);transform-origin:0 50%;">M20_N8...</span>
<span class="t" style="left:222.40px;top:1147.76px;font-size:14px;letter-spacing:0.093px;transform:scaleX(1.0169);transform-origin:0 50%;">Decimal</span>
<span class="t" style="left:329.30px;top:1149.76px;font-size:14px;letter-spacing:0.093px;transform:scaleX(1.0169);transform-origin:0 50%;">Decimal</span>
<div class="b" style="left:436px;top:1151px;width:17px;height:8px;background:#0909f8;"></div>
<div class="b" style="left:453px;top:1151px;width:64px;height:8px;background:#04c4c6;"></div>
<span class="t" style="left:607.42px;top:1147.76px;font-size:14px;color:#e0000f;letter-spacing:0.45px;margin-left:0.45px;">20</span>
<span class="t" style="left:696.71px;top:1149.76px;font-size:14px;color:#e0000f;letter-spacing:0.35px;margin-left:0.35px;">-30%</span>
<span class="t" style="left:821.52px;top:1147.76px;font-size:14px;color:#e0000f;letter-spacing:0.45px;margin-left:0.45px;">80</span>
<span class="t" style="left:907.20px;top:1149.76px;font-size:14px;color:#e0000f;letter-spacing:0.35px;margin-left:0.35px;">+30%</span>
<span class="t" style="left:1043.30px;top:1147.76px;font-size:14px;letter-spacing:0.45px;margin-left:0.45px;">0</span>
<svg class="b" style="left:82px;top:1179.5px;" width="13" height="16" viewBox="0 0 13 16"><path d="M4 2.6L9.4 8L4 13.4" fill="none" stroke="#111" stroke-width="2"/></svg>
<span class="t" style="left:125.00px;top:1181.76px;font-size:14px;">F60_E40...</span>
<span class="t" style="left:222.40px;top:1179.76px;font-size:14px;letter-spacing:0.093px;transform:scaleX(1.0169);transform-origin:0 50%;">Decimal</span>
<span class="t" style="left:329.30px;top:1181.76px;font-size:14px;letter-spacing:0.093px;transform:scaleX(1.0169);transform-origin:0 50%;">Decimal</span>
<div class="b" style="left:436px;top:1183px;width:51px;height:8px;background:#0909f8;"></div>
<div class="b" style="left:488px;top:1183px;width:29px;height:8px;background:#b002de;"></div>
<span class="t" style="left:607.42px;top:1179.76px;font-size:14px;letter-spacing:0.45px;margin-left:0.45px;">60</span>
<span class="t" style="left:829.30px;top:1179.76px;font-size:14px;letter-spacing:0.45px;margin-left:0.45px;">0</span>
<span class="t" style="left:1035.52px;top:1179.76px;font-size:14px;letter-spacing:0.45px;margin-left:0.45px;">40</span>
<div class="b" style="left:64px;top:1203px;width:1108px;height:32px;background:#fafafa;"></div>
<svg class="b" style="left:82px;top:1211.5px;" width="13" height="16" viewBox="0 0 13 16"><path d="M4 2.6L9.4 8L4 13.4" fill="none" stroke="#111" stroke-width="2"/></svg>
<span class="t" style="left:125.00px;top:1213.76px;font-size:14px;letter-spacing:0.097px;transform:scaleX(1.0187);transform-origin:0 50%;">F30_M3...</span>
<span class="t" style="left:222.40px;top:1211.76px;font-size:14px;letter-spacing:0.093px;transform:scaleX(1.0169);transform-origin:0 50%;">Decimal</span>
<span class="t" style="left:329.30px;top:1213.76px;font-size:14px;letter-spacing:0.093px;transform:scaleX(1.0169);transform-origin:0 50%;">Decimal</span>
<div class="b" style="left:436px;top:1215px;width:51px;height:8px;background:#0909f8;"></div>
<div class="b" style="left:487px;top:1215px;width:17px;height:8px;background:#04c4c6;"></div>
<div class="b" style="left:504px;top:1215px;width:13px;height:8px;background:#b002de;"></div>
<span class="t" style="left:607.42px;top:1211.76px;font-size:14px;color:#e0000f;letter-spacing:0.45px;margin-left:0.45px;">60</span>
<span class="t" style="left:696.71px;top:1213.76px;font-size:14px;color:#e0000f;letter-spacing:0.35px;margin-left:0.35px;">-10%</span>
<span class="t" style="left:821.52px;top:1211.76px;font-size:14px;color:#e0000f;letter-spacing:0.45px;margin-left:0.45px;">20</span>
<span class="t" style="left:907.20px;top:1213.76px;font-size:14px;color:#e0000f;letter-spacing:0.35px;margin-left:0.35px;">+10%</span>
<span class="t" style="left:1035.52px;top:1211.76px;font-size:14px;letter-spacing:0.45px;margin-left:0.45px;">20</span>
<svg class="b" style="left:82px;top:1243.5px;" width="13" height="16" viewBox="0 0 13 16"><path d="M4 2.6L9.4 8L4 13.4" fill="none" stroke="#111" stroke-width="2"/></svg>
<span class="t" style="left:125.00px;top:1245.76px;font-size:14px;letter-spacing:-0.013px;transform:scaleX(0.9974);transform-origin:0 50%;">E50_N5...</span>
<span class="t" style="left:222.40px;top:1243.76px;font-size:14px;letter-spacing:0.121px;transform:scaleX(1.0187);transform-origin:0 50%;">Date</span>
<span class="t" style="left:329.30px;top:1245.76px;font-size:14px;letter-spacing:0.121px;transform:scaleX(1.0187);transform-origin:0 50%;">Date</span>
<div class="b" style="left:436px;top:1247px;width:43px;height:8px;background:#04c4c6;"></div>
<div class="b" style="left:479px;top:1247px;width:38px;height:8px;background:#b002de;"></div>
<span class="t" style="left:615.20px;top:1243.76px;font-size:14px;color:#e0000f;letter-spacing:0.45px;margin-left:0.45px;">0</span>
<span class="t" style="left:688.93px;top:1245.76px;font-size:14px;color:#e0000f;letter-spacing:0.35px;margin-left:0.35px;">-100%</span>
<span class="t" style="left:821.52px;top:1243.76px;font-size:14px;color:#e0000f;letter-spacing:0.45px;margin-left:0.45px;">50</span>
<span class="t" style="left:910.71px;top:1245.76px;font-size:14px;color:#e0000f;letter-spacing:0.35px;margin-left:0.35px;">-40%</span>
<span class="t" style="left:1035.52px;top:1243.76px;font-size:14px;color:#e0000f;letter-spacing:0.45px;margin-left:0.45px;">50</span>
<span class="t" style="left:1120.90px;top:1245.76px;font-size:14px;color:#e0000f;letter-spacing:0.35px;margin-left:0.35px;">+40%</span>
<!-- expanded details -->
<div class="b" style="left:64px;top:545px;width:1108px;height:274px;background:#edf3fe;"></div>
<span class="t" style="left:109.30px;top:569.54px;font-size:12px;font-weight:700;letter-spacing:0.050px;transform:scaleX(1.0128);transform-origin:0 50%;">Statistics</span>
<span class="t" style="left:109.00px;top:616.96px;font-size:14px;color:#5a6a7b;letter-spacing:0.369px;transform:scaleX(1.0515);transform-origin:0 50%;">Min</span>
<span class="t" style="left:296.50px;top:616.96px;font-size:14px;font-weight:700;letter-spacing:0.235px;transform:scaleX(1.0420);transform-origin:0 50%;">5.235</span>
<span class="t" style="left:109.00px;top:655.46px;font-size:14px;color:#5a6a7b;letter-spacing:0.200px;transform:scaleX(1.0337);transform-origin:0 50%;">Median</span>
<span class="t" style="left:316.50px;top:655.46px;font-size:14px;font-weight:700;letter-spacing:0.716px;transform:scaleX(1.0740);transform-origin:0 50%;">33</span>
<span class="t" style="left:109.00px;top:693.96px;font-size:14px;color:#5a6a7b;letter-spacing:0.205px;transform:scaleX(1.0237);transform-origin:0 50%;">Max</span>
<span class="t" style="left:270.50px;top:693.96px;font-size:14px;font-weight:700;letter-spacing:0.033px;transform:scaleX(1.0048);transform-origin:0 50%;">Unknown</span>
<span class="t" style="left:109.00px;top:732.46px;font-size:14px;color:#5a6a7b;letter-spacing:0.120px;transform:scaleX(1.0285);transform-origin:0 50%;">1st Quartile</span>
<span class="t" style="left:316.50px;top:732.46px;font-size:14px;font-weight:700;letter-spacing:0.716px;transform:scaleX(1.0740);transform-origin:0 50%;">25</span>
<span class="t" style="left:109.00px;top:770.96px;font-size:14px;color:#5a6a7b;letter-spacing:0.186px;transform:scaleX(1.0438);transform-origin:0 50%;">3rd Quartile</span>
<span class="t" style="left:316.50px;top:770.96px;font-size:14px;font-weight:700;letter-spacing:0.716px;transform:scaleX(1.0740);transform-origin:0 50%;">42</span>
<span class="t" style="left:366.30px;top:568.74px;font-size:12px;font-weight:700;">Top Shapes</span>
<svg class="b" style="left:0px;top:0px;" width="1230" height="800" viewBox="0 0 1230 800"><path d="M448.5 599.5H949" stroke="#d2d6e1" stroke-width="1"/><path d="M448.5 639.5H949" stroke="#d2d6e1" stroke-width="1"/><path d="M448.5 679.5H949" stroke="#d2d6e1" stroke-width="1"/><path d="M448.5 720.5H949" stroke="#d2d6e1" stroke-width="1"/><path d="M448.5 760.5H949" stroke="#c6cad6" stroke-width="1"/><path d="M456.5 599V761" stroke="#c6cad6" stroke-width="1"/><path d="M538.5 599V761" stroke="#d2d6e1" stroke-width="1"/><path d="M620.5 599V761" stroke="#d2d6e1" stroke-width="1"/><path d="M702.5 599V761" stroke="#d2d6e1" stroke-width="1"/><path d="M784.5 599V761" stroke="#d2d6e1" stroke-width="1"/><path d="M866.5 599V761" stroke="#d2d6e1" stroke-width="1"/><path d="M948.5 599V761" stroke="#d2d6e1" stroke-width="1"/><path d="M456 604.2H864.8a4 4 0 0 1 4 4V630.6a4 4 0 0 1 -4 4H456Z" fill="#5c5cfb"/><path d="M456 644.4H645.0a4 4 0 0 1 4 4V670.8a4 4 0 0 1 -4 4H456Z" fill="#5c5cfb"/><path d="M456 684.6H551.6a4 4 0 0 1 4 4V711.0a4 4 0 0 1 -4 4H456Z" fill="#5c5cfb"/><path d="M456 724.8H462.3a4 4 0 0 1 4 4V751.2a4 4 0 0 1 -4 4H456Z" fill="#5c5cfb"/></svg>
<span class="t" style="left:407.37px;top:612.94px;font-size:12px;color:#555c66;">Double</span>
<span class="t" style="left:369.35px;top:653.14px;font-size:12px;color:#555c66;">CustomShape</span>
<span class="t" style="left:414.04px;top:693.34px;font-size:12px;color:#555c66;">String</span>
<span class="t" style="left:432.06px;top:733.54px;font-size:12px;color:#555c66;">Int</span>
<span class="t" style="left:453.36px;top:771.54px;font-size:12px;color:#555c66;">0</span>
<span class="t" style="left:528.07px;top:771.54px;font-size:12px;color:#555c66;">20K</span>
<span class="t" style="left:610.12px;top:771.54px;font-size:12px;color:#555c66;">40K</span>
<span class="t" style="left:692.17px;top:771.54px;font-size:12px;color:#555c66;">60K</span>
<span class="t" style="left:774.22px;top:771.54px;font-size:12px;color:#555c66;">80K</span>
<span class="t" style="left:852.93px;top:771.54px;font-size:12px;color:#555c66;">100K</span>
<span class="t" style="left:934.98px;top:771.54px;font-size:12px;color:#555c66;">120K</span>
<svg class="b" style="left:939px;top:570px;" width="14" height="14" viewBox="0 0 14 14"><g fill="none" stroke="#5a6a7b" stroke-width="1.3"><rect x="0.9" y="0.9" width="12.2" height="12.2" rx="1.3"/><path d="M0.9 5H13.1M0.9 9H13.1M5 0.9V13.1M9 0.9V13.1"/></g></svg>
<!-- annotation callouts -->
<div class="b" style="left:1310px;top:100.8px;width:351.5px;height:53.3px;border:3.3px solid #76b900;"></div>
<svg class="b" style="left:1270px;top:130px;" width="100" height="70" viewBox="0 0 100 70"><path d="M18.5 5.5V49.3H68" fill="none" stroke="#76b900" stroke-width="2.9"/><path d="M67 42.4L79.2 49.5L67 56.6Z" fill="#76b900"/></svg>
<svg class="b" style="left:288px;top:77.6px;" width="60" height="60" viewBox="0 0 60 60"><defs><radialGradient id="bg1" cx="50%" cy="45%" r="55%"><stop offset="0" stop-color="#55a332"/><stop offset="0.82" stop-color="#52a030"/><stop offset="1" stop-color="#468f28"/></radialGradient><filter id="bf1" x="-30%" y="-30%" width="170%" height="170%"><feGaussianBlur in="SourceAlpha" stdDeviation="1.3"/><feOffset dx="1.2" dy="1.8"/><feComponentTransfer><feFuncA type="linear" slope="0.8"/></feComponentTransfer><feMerge><feMergeNode/><feMergeNode in="SourceGraphic"/></feMerge></filter></defs><circle cx="30" cy="30" r="22.4" fill="url(#bg1)" filter="url(#bf1)"/></svg>
<span class="t" style="left:310.65px;top:95.17px;font-size:27.5px;font-weight:700;color:#fff;">1</span>
<svg class="b" style="left:1340.8px;top:157.9px;" width="60" height="60" viewBox="0 0 60 60"><defs><radialGradient id="bg2" cx="50%" cy="45%" r="55%"><stop offset="0" stop-color="#55a332"/><stop offset="0.82" stop-color="#52a030"/><stop offset="1" stop-color="#468f28"/></radialGradient><filter id="bf2" x="-30%" y="-30%" width="170%" height="170%"><feGaussianBlur in="SourceAlpha" stdDeviation="1.3"/><feOffset dx="1.2" dy="1.8"/><feComponentTransfer><feFuncA type="linear" slope="0.8"/></feComponentTransfer><feMerge><feMergeNode/><feMergeNode in="SourceGraphic"/></feMerge></filter></defs><circle cx="30" cy="30" r="22.4" fill="url(#bg2)" filter="url(#bf2)"/></svg>
<span class="t" style="left:1363.45px;top:175.47px;font-size:27.5px;font-weight:700;color:#fff;">2</span>
<svg class="b" style="left:1.6000000000000014px;top:153.8px;" width="60" height="60" viewBox="0 0 60 60"><defs><radialGradient id="bg3" cx="50%" cy="45%" r="55%"><stop offset="0" stop-color="#55a332"/><stop offset="0.82" stop-color="#52a030"/><stop offset="1" stop-color="#468f28"/></radialGradient><filter id="bf3" x="-30%" y="-30%" width="170%" height="170%"><feGaussianBlur in="SourceAlpha" stdDeviation="1.3"/><feOffset dx="1.2" dy="1.8"/><feComponentTransfer><feFuncA type="linear" slope="0.8"/></feComponentTransfer><feMerge><feMergeNode/><feMergeNode in="SourceGraphic"/></feMerge></filter></defs><circle cx="30" cy="30" r="22.4" fill="url(#bg3)" filter="url(#bf3)"/></svg>
<span class="t" style="left:24.25px;top:171.37px;font-size:27.5px;font-weight:700;color:#fff;">3</span>
<svg class="b" style="left:24.85px;top:262.5px;" width="60" height="60" viewBox="0 0 60 60"><defs><radialGradient id="bg4" cx="50%" cy="45%" r="55%"><stop offset="0" stop-color="#55a332"/><stop offset="0.82" stop-color="#52a030"/><stop offset="1" stop-color="#468f28"/></radialGradient><filter id="bf4" x="-30%" y="-30%" width="170%" height="170%"><feGaussianBlur in="SourceAlpha" stdDeviation="1.3"/><feOffset dx="1.2" dy="1.8"/><feComponentTransfer><feFuncA type="linear" slope="0.8"/></feComponentTransfer><feMerge><feMergeNode/><feMergeNode in="SourceGraphic"/></feMerge></filter></defs><circle cx="30" cy="30" r="22.4" fill="url(#bg4)" filter="url(#bf4)"/></svg>
<span class="t" style="left:47.50px;top:280.07px;font-size:27.5px;font-weight:700;color:#fff;">4</span>
<svg class="b" style="left:24.799999999999997px;top:454.2px;" width="60" height="60" viewBox="0 0 60 60"><defs><radialGradient id="bg5" cx="50%" cy="45%" r="55%"><stop offset="0" stop-color="#55a332"/><stop offset="0.82" stop-color="#52a030"/><stop offset="1" stop-color="#468f28"/></radialGradient><filter id="bf5" x="-30%" y="-30%" width="170%" height="170%"><feGaussianBlur in="SourceAlpha" stdDeviation="1.3"/><feOffset dx="1.2" dy="1.8"/><feComponentTransfer><feFuncA type="linear" slope="0.8"/></feComponentTransfer><feMerge><feMergeNode/><feMergeNode in="SourceGraphic"/></feMerge></filter></defs><circle cx="30" cy="30" r="22.4" fill="url(#bg5)" filter="url(#bf5)"/></svg>
<span class="t" style="left:47.45px;top:471.77px;font-size:27.5px;font-weight:700;color:#fff;">5</span>
<svg class="b" style="left:1455px;top:64.4px;" width="60" height="60" viewBox="0 0 60 60"><defs><radialGradient id="bg6" cx="50%" cy="45%" r="55%"><stop offset="0" stop-color="#55a332"/><stop offset="0.82" stop-color="#52a030"/><stop offset="1" stop-color="#468f28"/></radialGradient><filter id="bf6" x="-30%" y="-30%" width="170%" height="170%"><feGaussianBlur in="SourceAlpha" stdDeviation="1.3"/><feOffset dx="1.2" dy="1.8"/><feComponentTransfer><feFuncA type="linear" slope="0.8"/></feComponentTransfer><feMerge><feMergeNode/><feMergeNode in="SourceGraphic"/></feMerge></filter></defs><circle cx="30" cy="30" r="22.4" fill="url(#bg6)" filter="url(#bf6)"/></svg>
<span class="t" style="left:1477.65px;top:81.97px;font-size:27.5px;font-weight:700;color:#fff;">6</span>
</body></html>
